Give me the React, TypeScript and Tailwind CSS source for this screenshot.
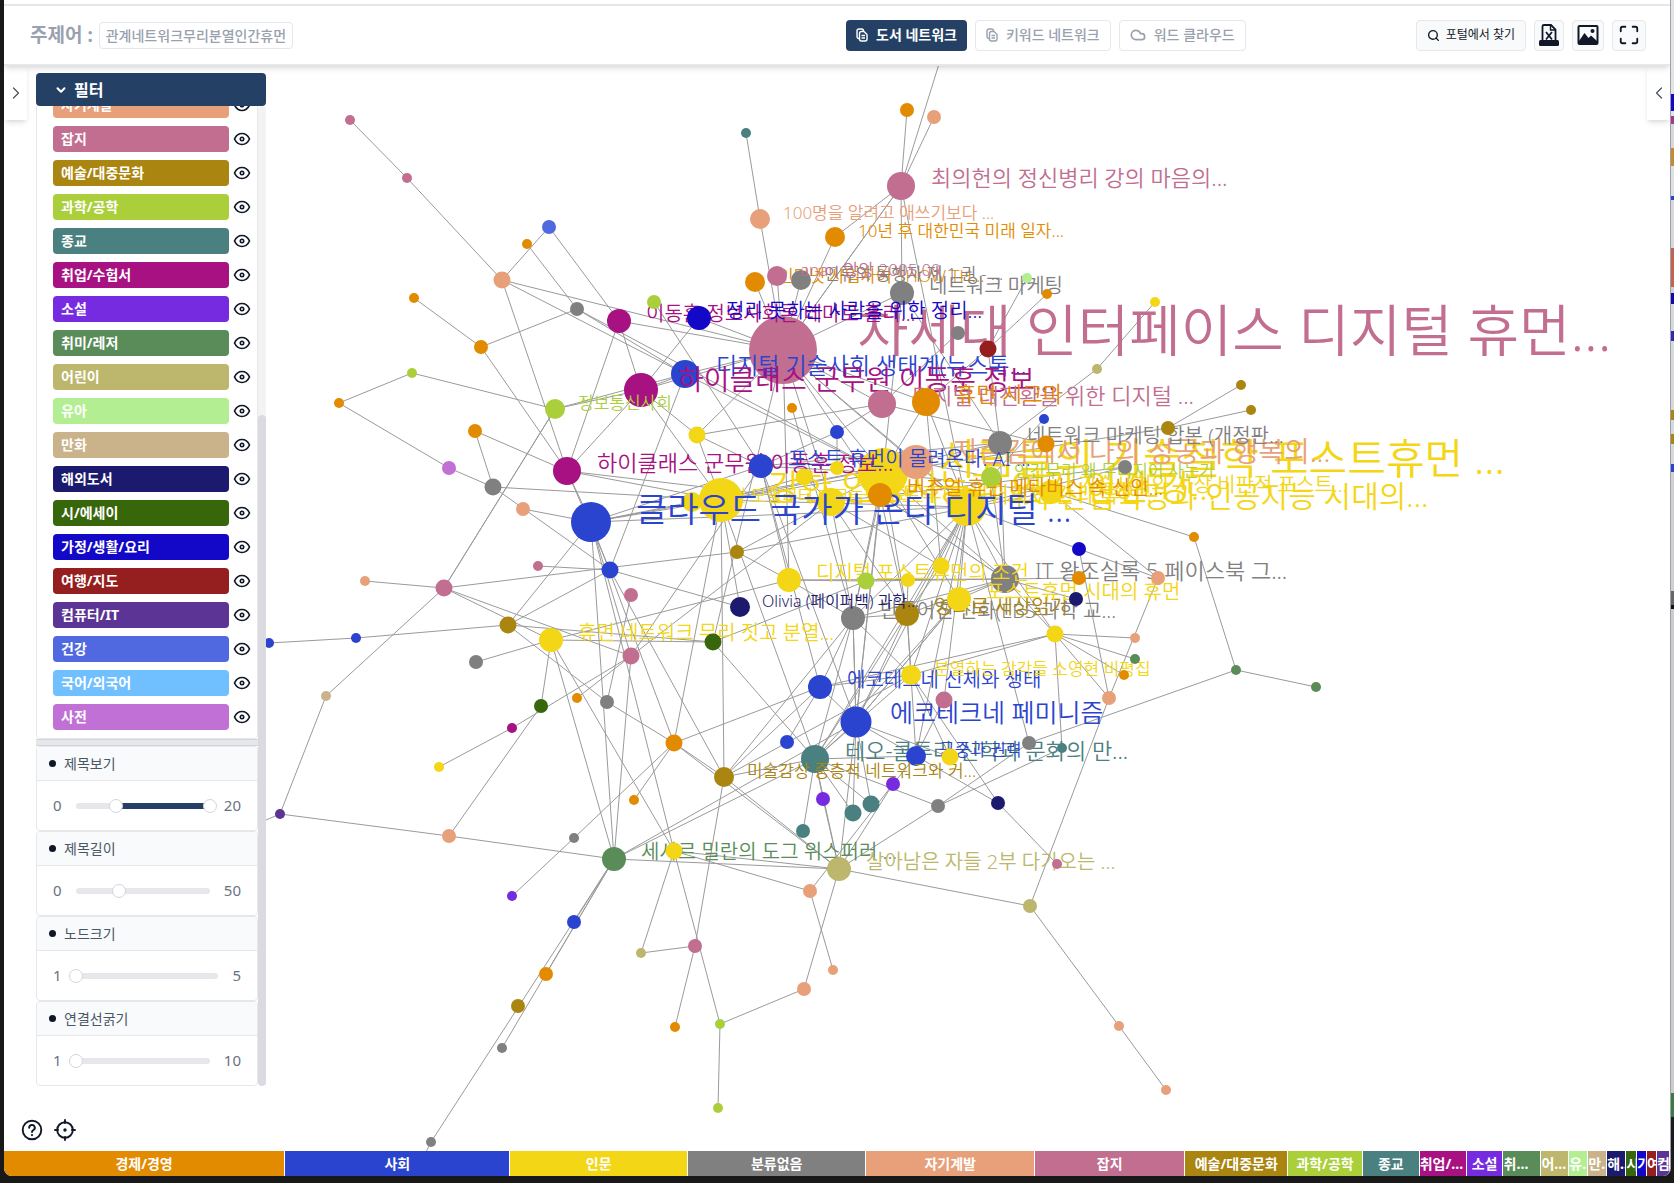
import React from "react";
import { ChevronDown, ChevronLeft, ChevronRight, Cloud, Maximize, Search } from "lucide-react";

const C = {
  economy: "#e28b00",
  society: "#2b44cf",
  human: "#f3d616",
  none: "#808080",
  self: "#e7a07a",
  magazine: "#c16e90",
  art: "#aa8510",
  science: "#abcf3b",
  religion: "#4b8080",
  exam: "#a81182",
  novel: "#772be0",
  hobby: "#598c59",
  child: "#bcb76c",
  infant: "#b3ef92",
  comic: "#cab38a",
  foreign: "#1c1a6e",
  poem: "#38660b",
  home: "#1408c8",
  travel: "#951f1f",
  it: "#5b3496",
  health: "#5169e0",
  language: "#70bfff",
  dict: "#c170d5",
};

type Category = { name: string; color: string; share: number };

const categories: Category[] = [
  { name: "경제/경영", color: C.economy, share: 281 },
  { name: "사회", color: C.society, share: 225 },
  { name: "인문", color: C.human, share: 177 },
  { name: "분류없음", color: C.none, share: 178 },
  { name: "자기계발", color: C.self, share: 168 },
  { name: "잡지", color: C.magazine, share: 150 },
  { name: "예술/대중문화", color: C.art, share: 102 },
  { name: "과학/공학", color: C.science, share: 74 },
  { name: "종교", color: C.religion, share: 56 },
  { name: "취업/수험서", color: C.exam, share: 46 },
  { name: "소설", color: C.novel, share: 36 },
  { name: "취미/레저", color: C.hobby, share: 37 },
  { name: "어린이", color: C.child, share: 27 },
  { name: "유아", color: C.infant, share: 18 },
  { name: "만화", color: C.comic, share: 18 },
  { name: "해외도서", color: C.foreign, share: 18 },
  { name: "시/에세이", color: C.poem, share: 10 },
  { name: "가정/생활/요리", color: C.home, share: 9 },
  { name: "여행/지도", color: C.travel, share: 9 },
  { name: "컴퓨터/IT", color: C.it, share: 12 },
  { name: "건강", color: C.health, share: 0 },
  { name: "국어/외국어", color: C.language, share: 0 },
  { name: "사전", color: C.dict, share: 0 },
];

type GraphNode = [id: string, x: number, y: number, r: number, color: string, size?: number, label?: string];

/* Books with a title, in drawing order from back to front. */
const titled: GraphNode[] = [
  ["A", 733, 327.5, 34, C.magazine, 56, "차세대 인터페이스 디지털 휴먼..."],
  ["R", 827, 443, 25, C.human, 42, "사람들의 기술철학 포스트휴먼 ..."],
  ["U", 675, 468, 22, C.human, 35, "강한 인공지능과 인간 인간 강..."],
  ["V", 906, 475, 19, C.human, 30, "4차 산업혁명과 인공지능 시대의..."],
  ["AA", 778, 470, 14, C.human, 22, "포스트휴먼 시대의 인간과 휴먼..."],
  ["AB", 648, 470.5, 10, C.human, 17, "휴먼 모빌리티 테크놀로지와..."],
  ["W", 554, 488.5, 20, C.society, 34, "클라우드 국가가 온다 디지털 ..."],
  ["K", 642, 350, 14, C.society, 23, "디지털 기술사회 생태계(뉴스톡..."],
  ["L", 600, 365, 17, C.exam, 28, "하이클래스 군무원 이동훈 정보..."],
  ["S", 858, 433, 17, C.self, 28, "자존감에서 나의 성공과 행복의..."],
  ["AL", 802, 676, 15.5, C.society, 25, "에코테크네 페미니즘"],
  ["B", 844, 174.5, 14, C.magazine, 22, "최의헌의 정신병리 강의 마음의..."],
  ["M", 531, 441, 14, C.exam, 22, "하이클래스 군무원 이동훈 정보..."],
  ["O", 826, 378, 14, C.magazine, 22, "디지털 대전환을 위한 디지털 ..."],
  ["P", 867, 377, 14, C.economy, 22, "휴먼 시그마"],
  ["AH", 941, 542, 14, C.none, 22, "IT 왕조실록 5 페이스북 그..."],
  ["AM", 763.5, 710.5, 14, C.religion, 22, "테오-쿨투라 신학과 문화의 만..."],
  ["H", 845, 274, 12, C.none, 20, "네트워크 마케팅"],
  ["I", 580, 300.5, 12, C.exam, 20, "이동훈 정보사회론 테마로 흘러..."],
  ["J", 655, 298, 12, C.home, 20, "정리 못하는 사람을 위한 정리..."],
  ["Q", 937, 415, 12, C.none, 20, "네트워크 마케팅 합본 (개정판..."],
  ["T", 712.5, 436.5, 12, C.society, 20, "포스트 휴먼이 몰려온다. AI ..."],
  ["Z", 984, 461, 12, C.human, 20, "기술사회와 사상 비판적 포스트..."],
  ["X", 824, 464, 12, C.economy, 20, "버추얼 휴먼 메타버스 속 신인..."],
  ["AC", 739, 543, 12, C.human, 20, "디지털 포스트휴먼의 조건"],
  ["AE", 799, 579, 12, C.none, 20, "만들어진 신화(EBS 과학 교..."],
  ["AF", 850, 575, 12, C.art, 20, "영화로 세상읽기"],
  ["AG", 898.5, 561, 12, C.human, 20, "포스트휴먼 시대의 휴먼"],
  ["AI", 516, 599.5, 12, C.human, 20, "휴먼 네트워크 무리 짓고 분열..."],
  ["AJ", 768, 643.5, 12, C.society, 20, "에코테크네 신체와 생태"],
  ["AP", 575, 805, 12, C.hobby, 20, "세사르 밀란의 도그 위스퍼러 ..."],
  ["AQ", 786, 814, 12, C.child, 20, "살아남은 자들 2부 다가오는 ..."],
  ["C", 712, 205, 10, C.self, 17, "100명을 알려고 애쓰기보다 ..."],
  ["D", 782, 222, 10, C.economy, 17, "10년 후 대한민국 미래 일자..."],
  ["E", 707, 264.5, 10, C.economy, 17, "인터넷 사업자여 SHOW TH..."],
  ["G", 750, 262, 10, C.none, 17, "인류의 동행자 제 1 권 - ..."],
  ["F", 728, 258.5, 10, C.magazine, 17, "anan 앙앙 2005.09"],
  ["N", 520, 383.5, 10, C.science, 17, "정보통신사회"],
  ["Y", 928, 447, 10, C.science, 17, "인간무리 왜 무리지어 사는가"],
  ["AD", 693, 568.5, 10, C.foreign, 16, "Olivia (페이퍼백) 과학..."],
  ["AK", 853, 632, 10, C.human, 17, "분열하는 감각들 소영현 비평집"],
  ["AN", 858, 708, 10, C.society, 17, "군중과 권력"],
  ["AO", 678, 728, 10, C.art, 17, "미술감상 중층적 네트워크와 커..."],
];

const S = 5;
const M = 7;
const L = 8.5;

const untitled: GraphNode[] = [
  ["1", 328, 112, S, C.magazine], ["2", 381, 167, S, C.magazine], ["3", 699, 125, S, C.religion],
  ["4", 850, 103, M, C.economy], ["5", 875, 109.5, M, C.self], ["6", 514, 213, M, C.health],
  ["7", 494, 228.5, S, C.economy], ["8", 470, 262.5, L, C.self], ["9", 388, 279, S, C.economy],
  ["10", 540, 289, M, C.none], ["11", 613, 283, M, C.science], ["12", 450.5, 325, M, C.economy],
  ["13", 386, 349.5, S, C.science], ["14", 317.5, 377.5, S, C.economy], ["15", 445, 403.5, M, C.economy],
  ["16", 420.5, 438.5, M, C.dict], ["17", 461.5, 456.5, L, C.none], ["18", 489.5, 476.5, M, C.self],
  ["19", 504, 530.5, S, C.magazine], ["20", 571, 533.5, L, C.society], ["21", 591, 557.5, M, C.magazine],
  ["22", 342, 544.5, S, C.self], ["23", 415.5, 550.5, L, C.magazine], ["24", 476, 585, L, C.art],
  ["25", 252, 602, S, C.society], ["26", 333, 598, S, C.society], ["27", 446, 620, M, C.none],
  ["28", 305.5, 652, S, C.comic], ["29", 507, 661, M, C.poem], ["30", 480, 681.5, S, C.exam],
  ["31", 411, 718, S, C.human], ["32", 262, 762, S, C.it], ["33", 420.5, 783, M, C.self],
  ["34", 479.5, 839, S, C.novel], ["35", 538, 864, M, C.society], ["36", 511.5, 912, M, C.economy],
  ["37", 485, 942, M, C.art], ["38", 470, 982, S, C.none], ["39", 404, 1070, S, C.none],
  ["40", 538, 784.5, S, C.none], ["41", 594, 749.5, S, C.economy], ["42", 631.5, 695.5, L, C.economy],
  ["43", 569, 658, M, C.none], ["44", 540, 653.5, S, C.economy], ["45", 591.5, 614, L, C.magazine],
  ["46", 668, 601, L, C.poem], ["47", 690, 517, M, C.art], ["48", 653, 407.5, L, C.human],
  ["49", 742, 382.5, S, C.economy], ["50", 784, 405, M, C.society], ["51", 753, 447, L, C.human],
  ["52", 784, 438, M, C.human], ["53", 811.5, 544.5, L, C.science], ["54", 850.5, 543, M, C.human],
  ["55", 881.5, 530.5, L, C.human], ["56", 988, 594, L, C.human], ["57", 1011, 514.5, M, C.home],
  ["58", 1011, 541, M, C.economy], ["59", 1007.5, 561.5, M, C.foreign], ["60", 1084.5, 541.5, M, C.self],
  ["61", 1118, 503, S, C.economy], ["62", 1063, 597.5, S, C.self], ["63", 1063, 617, S, C.hobby],
  ["64", 1052.5, 632.5, S, C.economy], ["65", 1039, 654, M, C.self], ["66", 1157.5, 627.5, S, C.hobby],
  ["67", 1233, 643.5, S, C.hobby], ["68", 1054, 437, M, C.none], ["69", 1094.5, 401, M, C.art],
  ["70", 1162.5, 361, S, C.art], ["71", 1172, 384.5, S, C.art], ["72", 1027.5, 345.5, S, C.child],
  ["73", 1081.5, 283, S, C.human], ["74", 978, 392.5, S, C.society], ["75", 979.5, 415.5, L, C.economy],
  ["76", 925, 327, L, C.travel], ["77", 897, 311.5, M, C.none], ["78", 962, 260.5, S, C.infant],
  ["79", 981, 275.5, S, C.economy], ["80", 884, 656, L, C.magazine], ["81", 963.5, 696, M, C.none],
  ["82", 995, 700.5, S, C.religion], ["83", 889.5, 709, L, C.human], ["84", 836, 734.5, M, C.novel],
  ["85", 770.5, 748, M, C.novel], ["86", 815.5, 753.5, L, C.religion], ["87", 799, 761.5, L, C.religion],
  ["88", 752, 778.5, M, C.religion], ["89", 737.5, 695, M, C.society], ["90", 879, 754.5, M, C.none],
  ["91", 935, 752.5, M, C.foreign], ["92", 990, 809.5, S, C.magazine], ["93", 964.5, 848.5, M, C.child],
  ["94", 1048, 961, S, C.self], ["95", 1092.5, 1021, S, C.self], ["96", 631.5, 797.5, L, C.human],
  ["97", 600.5, 893, S, C.child], ["98", 651, 886, M, C.magazine], ["99", 632.5, 962, S, C.economy],
  ["100", 674.5, 959.5, S, C.science], ["101", 672.5, 1037.5, S, C.science], ["102", 753, 926, M, C.self],
  ["103", 780, 908.5, S, C.self], ["104", 758.5, 834.5, M, C.self],
  /* Nodes past the edge of the view: only their links can be seen. */
  ["top", 884, 45, 0, C.none], ["left", 236, 774, 0, C.none], ["bottom", 394, 1088, 0, C.none],
];

const links = `
1-2 2-8 8-6 8-K 8-A 8-M 6-I 7-10 9-12 12-10 12-M 10-K 10-R 13-14 13-N 14-16 16-17 15-17 15-M 17-U 17-20 18-W 19-20
22-23 23-28 28-32 32-left 32-33 33-AP 33-29 29-AI 30-31 30-45 23-N 23-47 23-AI 23-45 24-26 26-25 24-W 24-46 24-43
27-AI 34-40 40-42 35-AP 36-AP 38-AP 39-AP 39-bottom 41-42 42-AJ 42-AO 42-AQ 42-W 43-21 43-42 44-45 45-AP 45-AA 45-T
96-AI 96-AQ 96-104 96-97 96-W 100-96 98-AO 98-97 98-99 100-102 100-101 102-AQ 103-104 104-84
AP-W AP-AI AP-AL AP-AM AP-AQ AO-AE AO-AJ AO-AM AO-AQ AO-20 AO-AK AM-AL AM-AF AM-AE AM-AG AM-AN AM-85 AM-88 AM-87 AM-86 AM-90
AM-46 AM-U AM-V AM-AK AL-AJ AL-X AL-V AL-AG AL-AN AL-83 AL-AE AL-87 AL-86 AL-AQ AL-T AN-91 91-92 93-AQ 93-65 93-94 94-95
90-81 90-82 90-AQ 84-AQ 85-AQ 84-AN AQ-AM AN-80 AN-V AK-83 AK-91 AK-AJ AK-AE AK-AF AK-56 AK-AN AJ-T AJ-89 AJ-56 AJ-AE 81-66
82-56 66-61 66-67 61-Z 56-AH 56-V 56-62 56-63 56-64 56-65 65-57 65-60 57-V 57-60 60-Z AH-58 AH-AC AH-59 AH-Q AH-X AH-R
81-V AH-AG AH-AF AH-AE 53-AC 53-46 53-AH 55-V 55-P 55-AF 54-AF 47-AC 47-R 48-L 48-T 48-U 48-O 49-AE 50-52 50-T 50-O
N-L N-K N-23 M-L M-U M-AA M-W M-I M-20 L-K L-A L-U K-A K-20 K-R I-A I-L J-A J-L 11-T A-B A-C A-D A-E A-F A-G A-H
A-O A-P A-R A-S A-V A-AA A-X A-AC A-46 A-48 B-4 B-5 B-top B-D B-H B-V B-A C-3 H-Q H-R 77-O 76-P 76-Q 76-78 76-79
73-72 72-Q 74-Y 69-70 69-71 69-R 68-AA 68-V 75-O 75-Z Q-S Q-T P-R P-V S-U S-V S-W T-W T-R T-AC U-V U-AO U-AD U-42 W-V W-R W-45
W-AB AA-AF AA-AE AA-55 R-AE R-AF R-AG R-AL X-AF X-AH X-AE V-AG V-AF V-AE V-AH V-AK V-80 Y-S Y-AH Z-R Z-47
AC-AI AC-AE AD-20 AE-AF AE-AL AG-AL AF-AK AF-AL 51-U 51-AA 46-AI 24-20
`
  .trim()
  .split(/\s+/)
  .map((pair) => pair.split("-"));

/* View state of the graph: zoom factor and the pan offset in pixels. */
const ZOOM = 1.0676;
const PAN = { x: 4, y: 66 };
const px = (x: number) => Math.round(x * ZOOM) - PAN.x;
const py = (y: number) => Math.round(y * ZOOM) - PAN.y;
const byId = new Map([...titled, ...untitled].map((n) => [n[0], n]));

function NetworkGraph() {
  return (
    <svg className="absolute inset-0 h-full w-full" role="img" aria-label="도서 네트워크">
      <g stroke="#9a9a9a" strokeWidth={1}>
        {links.map(([a, b], i) => {
          const from = byId.get(a);
          const to = byId.get(b);
          if (!from || !to) return null;
          return <line key={i} x1={px(from[1])} y1={py(from[2])} x2={px(to[1])} y2={py(to[2])} />;
        })}
      </g>
      {[...titled, ...untitled].map(([id, x, y, r, color, size, label]) => (
        <g key={id} fill={color}>
          <circle cx={px(x)} cy={py(y)} r={r} />
          {label && size && (
            <text
              x={px(x) + Math.round(size * 1.3) + 1}
              y={py(y) + Math.round(size / 25) - 1}
              fontSize={size}
              className="font-[350]"
            >
              {label}
            </text>
          )}
        </g>
      ))}
    </svg>
  );
}

function PagesIcon() {
  return (
    <svg viewBox="0 0 12 14" className="h-3.5 w-3" fill="none" stroke="currentColor" strokeWidth="1.4" strokeLinejoin="round" aria-hidden="true">
      <path d="M3.500 10.500h-.6A1.900 1.900 0 0 1 1 8.600V2.900A1.900 1.900 0 0 1 2.900 1h2.700A1.900 1.900 0 0 1 7.500 2.900" />
      <path d="M5.400 3.500H8L11 6.500v4.600A1.900 1.900 0 0 1 9.100 13H5.400a1.900 1.900 0 0 1-1.900-1.900V5.400a1.900 1.900 0 0 1 1.900-1.900z" />
      <path d="M5.500 7.500h3.500M5.500 10h3.500" />
    </svg>
  );
}

function ExcelIcon() {
  return (
    <svg viewBox="0 0 20 22" className="h-[22px] w-5" aria-hidden="true">
      <path d="M3.500 16V2.500A1.500 1.500 0 0 1 5 1h7l4.500 4.500V16" fill="none" stroke="currentColor" strokeWidth="1.800" />
      <path d="M11.500 1.500v4.500H16" fill="none" stroke="currentColor" strokeWidth="1.400" />
      <path d="M7 8l6 7.500M13 8l-6 7.500" fill="none" stroke="currentColor" strokeWidth="1.800" />
      <rect x="0" y="16" width="20" height="6" rx="1.500" fill="currentColor" />
    </svg>
  );
}

function ImageIcon() {
  return (
    <svg viewBox="0 0 22 20" className="h-5 w-[22px]" aria-hidden="true">
      <rect x="1.500" y="1" width="19" height="18" rx="1" fill="none" stroke="currentColor" strokeWidth="2" />
      <path d="M2 16l5.500-8 4 5 2.500-2.500 6 5.500v3H2z" fill="currentColor" />
      <circle cx="15.500" cy="6" r="2" fill="currentColor" />
    </svg>
  );
}

function EyeIcon() {
  return (
    <svg viewBox="0 0 18 14" className="h-3.5 w-[18px]" fill="none" stroke="currentColor" aria-hidden="true">
      <path d="M1.500 7C3.200 3.300 5.800 1.500 9 1.500S14.800 3.300 16.500 7C14.800 10.700 12.200 12.500 9 12.500S3.200 10.700 1.500 7z" strokeWidth="1.700" strokeLinejoin="round" />
      <circle cx="9" cy="7" r="1.700" strokeWidth="1.600" />
    </svg>
  );
}

function HelpIcon() {
  return (
    <svg viewBox="0 0 22 22" className="size-[22px]" fill="none" stroke="currentColor" strokeWidth="1.900" strokeLinecap="round" aria-hidden="true">
      <circle cx="11" cy="11" r="9.300" />
      <path d="M8.200 8.700a2.800 2.700 0 1 1 4.200 2.300c-.9.600-1.400 1-1.400 2" />
      <path d="M11 16v.1" strokeWidth="2.200" />
    </svg>
  );
}

function LocateIcon() {
  return (
    <svg viewBox="0 0 22 22" className="size-[22px]" fill="none" stroke="currentColor" strokeWidth="1.900" strokeLinecap="round" aria-hidden="true">
      <circle cx="11" cy="11" r="7.800" />
      <path d="M11 1v3M11 18v3M1 11h3M18 11h3" />
      <circle cx="11" cy="11" r="1.700" fill="currentColor" stroke="none" />
    </svg>
  );
}

const thumb =
  "pointer-events-none absolute -left-[7px] -top-1 m-0 h-3.5 w-[calc(100%+14px)] appearance-none bg-transparent [&::-webkit-slider-thumb]:pointer-events-auto [&::-webkit-slider-thumb]:size-3.5 [&::-webkit-slider-thumb]:appearance-none [&::-webkit-slider-thumb]:rounded-full [&::-webkit-slider-thumb]:border [&::-webkit-slider-thumb]:border-solid [&::-webkit-slider-thumb]:border-gray-300 [&::-webkit-slider-thumb]:bg-white";

type Setting = { title: string; min: number; max: number; values: number[] };

const settings: Setting[] = [
  { title: "제목보기", min: 0, max: 20, values: [6, 20] },
  { title: "제목길이", min: 0, max: 50, values: [16] },
  { title: "노드크기", min: 1, max: 5, values: [1] },
  { title: "연결선굵기", min: 1, max: 10, values: [1] },
];

function SettingPanel({ title, min, max, values }: Setting) {
  const pct = (v: number) => ((v - min) / (max - min)) * 100;
  return (
    <section className="shrink-0 overflow-hidden rounded border border-gray-200">
      <h3 className="flex h-[34px] items-center gap-2 border-b border-gray-200 bg-gray-50 pl-3 text-sm text-gray-600">
        <span className="size-[7px] rounded-full bg-gray-900" />
        {title}
      </h3>
      <div className="flex h-[49px] items-center gap-3.5 px-4 text-[15px] text-gray-500">
        <span>{min}</span>
        <div className="relative h-1.5 flex-1 rounded-full bg-gray-200">
          {values.length > 1 && (
            <div
              className="absolute inset-y-0 bg-[#244165]"
              style={{ left: `${pct(values[0])}%`, right: `${100 - pct(values[1])}%` }}
            />
          )}
          {values.map((v, i) => (
            <input key={i} type="range" aria-label={`${title} ${i + 1}`} min={min} max={max} defaultValue={v} className={thumb} />
          ))}
        </div>
        <span>{max}</span>
      </div>
    </section>
  );
}

function FilterPanel() {
  return (
    <aside className="relative ml-8 flex min-h-0 w-[230px] flex-1 flex-col bg-white">
      <button className="flex h-[33px] shrink-0 items-center gap-1.5 rounded bg-[#244165] pl-[18px] text-base font-bold leading-none text-white">
        <ChevronDown className="size-3.5" strokeWidth={3.5} />
        필터
      </button>
      <div className="flex min-h-0 flex-1">
        <div className="flex min-w-0 flex-1 flex-col justify-end overflow-hidden">
          <ul className="flex shrink-0 flex-col gap-2 rounded-b border border-gray-200 pb-2 pl-4 pr-1.5">
            {categories.map((c) => (
              <li key={c.name} className="flex items-center justify-between">
                <span
                  className="flex h-[26px] w-44 items-center rounded pl-2 text-sm font-bold text-white"
                  style={{ backgroundColor: c.color }}
                >
                  {c.name}
                </span>
                <button aria-label={`${c.name} 표시`} className="text-gray-900">
                  <EyeIcon />
                </button>
              </li>
            ))}
          </ul>
          <div className="h-[7px] shrink-0 border-y border-gray-300 bg-gray-200" />
          {settings.map((s) => (
            <SettingPanel key={s.title} {...s} />
          ))}
        </div>
        <div className="flex w-2 flex-col justify-end rounded-full bg-[#f3f3f3]">
          <div className="h-[686px] max-h-[68.5%] rounded-full bg-[#dbdae0]" />
        </div>
      </div>
    </aside>
  );
}

function Header() {
  return (
    <header className="relative z-10 flex h-[62px] shrink-0 items-center gap-2 border-y-2 border-gray-200 bg-white pl-[26px] pr-6 shadow-md">
      <div className="flex w-1/2 items-center gap-1.5">
        <label htmlFor="subject" className="text-[19px] font-bold text-gray-400">
          주제어 :
        </label>
        <input
          id="subject"
          readOnly
          defaultValue="관계네트워크무리분열인간휴먼"
          className="h-[27px] w-[194px] rounded border border-gray-200 px-1.5 text-sm font-medium text-gray-400 outline-none"
        />
      </div>
      <nav className="flex shrink-0 gap-2 text-sm font-medium text-gray-400">
        <button className="flex h-[31px] items-center gap-2 rounded bg-[#244165] px-2.5 font-bold text-white">
          <PagesIcon />
          도서 네트워크
        </button>
        <button className="flex h-[31px] items-center gap-2 rounded border border-gray-200 px-2.5">
          <PagesIcon />
          키워드 네트워크
        </button>
        <button className="flex h-[31px] items-center gap-2 rounded border border-gray-200 px-2.5">
          <Cloud className="size-4" strokeWidth={2.5} />
          워드 클라우드
        </button>
      </nav>
      <div className="ml-auto flex shrink-0 gap-2 text-gray-900">
        <button className="flex h-[31px] items-center gap-1.5 rounded border border-gray-200 bg-gray-50 px-2.5 text-xs">
          <Search className="size-[13px]" strokeWidth={2.5} />
          포털에서 찾기
        </button>
        <button aria-label="엑셀 다운로드" className="flex h-[31px] w-[30px] items-center justify-center rounded border border-gray-200 bg-gray-50">
          <ExcelIcon />
        </button>
        <button aria-label="이미지 저장" className="flex h-[31px] w-8 items-center justify-center rounded border border-gray-200 bg-gray-50">
          <ImageIcon />
        </button>
        <button aria-label="전체 화면" className="flex h-[31px] w-[34px] items-center justify-center rounded border border-gray-200 bg-gray-50">
          <Maximize className="size-[22px]" strokeWidth={2} />
        </button>
      </div>
    </header>
  );
}

/* Sliver of the neighbouring window along the right side: [height share, color]. */
const sliver: [number, string][] = [
  [94, "#e4e4e4"], [17, "#1408c8"], [5, "#e4e4e4"], [8, "#a03a8a"], [24, "#d8d8d8"], [18, "#c98a2a"],
  [30, "#e0e0e0"], [4, "#2b44cf"], [48, "#d8d8d8"], [39, "#c4624c"], [6, "#d0d0d0"], [11, "#1408a8"],
  [27, "#d8d8d8"], [10, "#3328b0"], [69, "#d8d8d8"], [10, "#aa8510"], [14, "#d8d8d8"], [10, "#aa8510"],
  [20, "#d8d8d8"], [8, "#2b44cf"], [119, "#d0d0d0"], [14, "#666666"], [4, "#111111"], [484, "#cccccc"],
  [24, "#3f7a45"], [66, "#1b1b1b"],
];

export default function App() {
  return (
    <div className="flex h-screen w-full bg-[#1a1919] pl-1 font-['Noto_Sans','Noto_Sans_CJK_KR',sans-serif]">
      <div className="flex min-w-0 flex-1 flex-col pb-[7px]">
        <div className="flex min-h-0 flex-1 flex-col overflow-hidden rounded-b-lg border-r border-gray-400 bg-white pt-1">
          <Header />
          <main className="relative flex min-h-0 flex-1 flex-col overflow-hidden pt-[7px]">
            <NetworkGraph />
            <button aria-label="왼쪽 패널 열기" className="absolute left-0 top-0 flex h-[54px] w-[23px] items-center justify-center bg-white text-gray-600 shadow-md">
              <ChevronRight className="size-5" strokeWidth={1.5} />
            </button>
            <button aria-label="오른쪽 패널 열기" className="absolute right-0 top-0 flex h-[54px] w-[23px] items-center justify-center bg-white text-gray-600 shadow-md">
              <ChevronLeft className="size-5" strokeWidth={1.5} />
            </button>
            <FilterPanel />
            <div className="relative flex h-[65px] shrink-0 items-center gap-[11px] pl-[17px] pt-[22px] text-gray-900">
              <button aria-label="도움말">
                <HelpIcon />
              </button>
              <button aria-label="가운데로 이동">
                <LocateIcon />
              </button>
            </div>
          </main>
          <footer className="flex h-[25px] shrink-0">
            {categories
              .filter((c) => c.share > 0)
              .map((c) => (
                <div
                  key={c.name}
                  className="min-w-0 basis-0 overflow-hidden text-ellipsis whitespace-nowrap border-r border-white text-center text-sm font-bold leading-[25px] text-white"
                  style={{ backgroundColor: c.color, flexGrow: c.share }}
                >
                  {c.name}
                </div>
              ))}
          </footer>
        </div>
      </div>
      <div className="flex w-[3px] shrink-0 flex-col" aria-hidden="true">
        {sliver.map(([share, color], i) => (
          <div key={i} className="basis-0" style={{ flexGrow: share, backgroundColor: color }} />
        ))}
      </div>
    </div>
  );
}
